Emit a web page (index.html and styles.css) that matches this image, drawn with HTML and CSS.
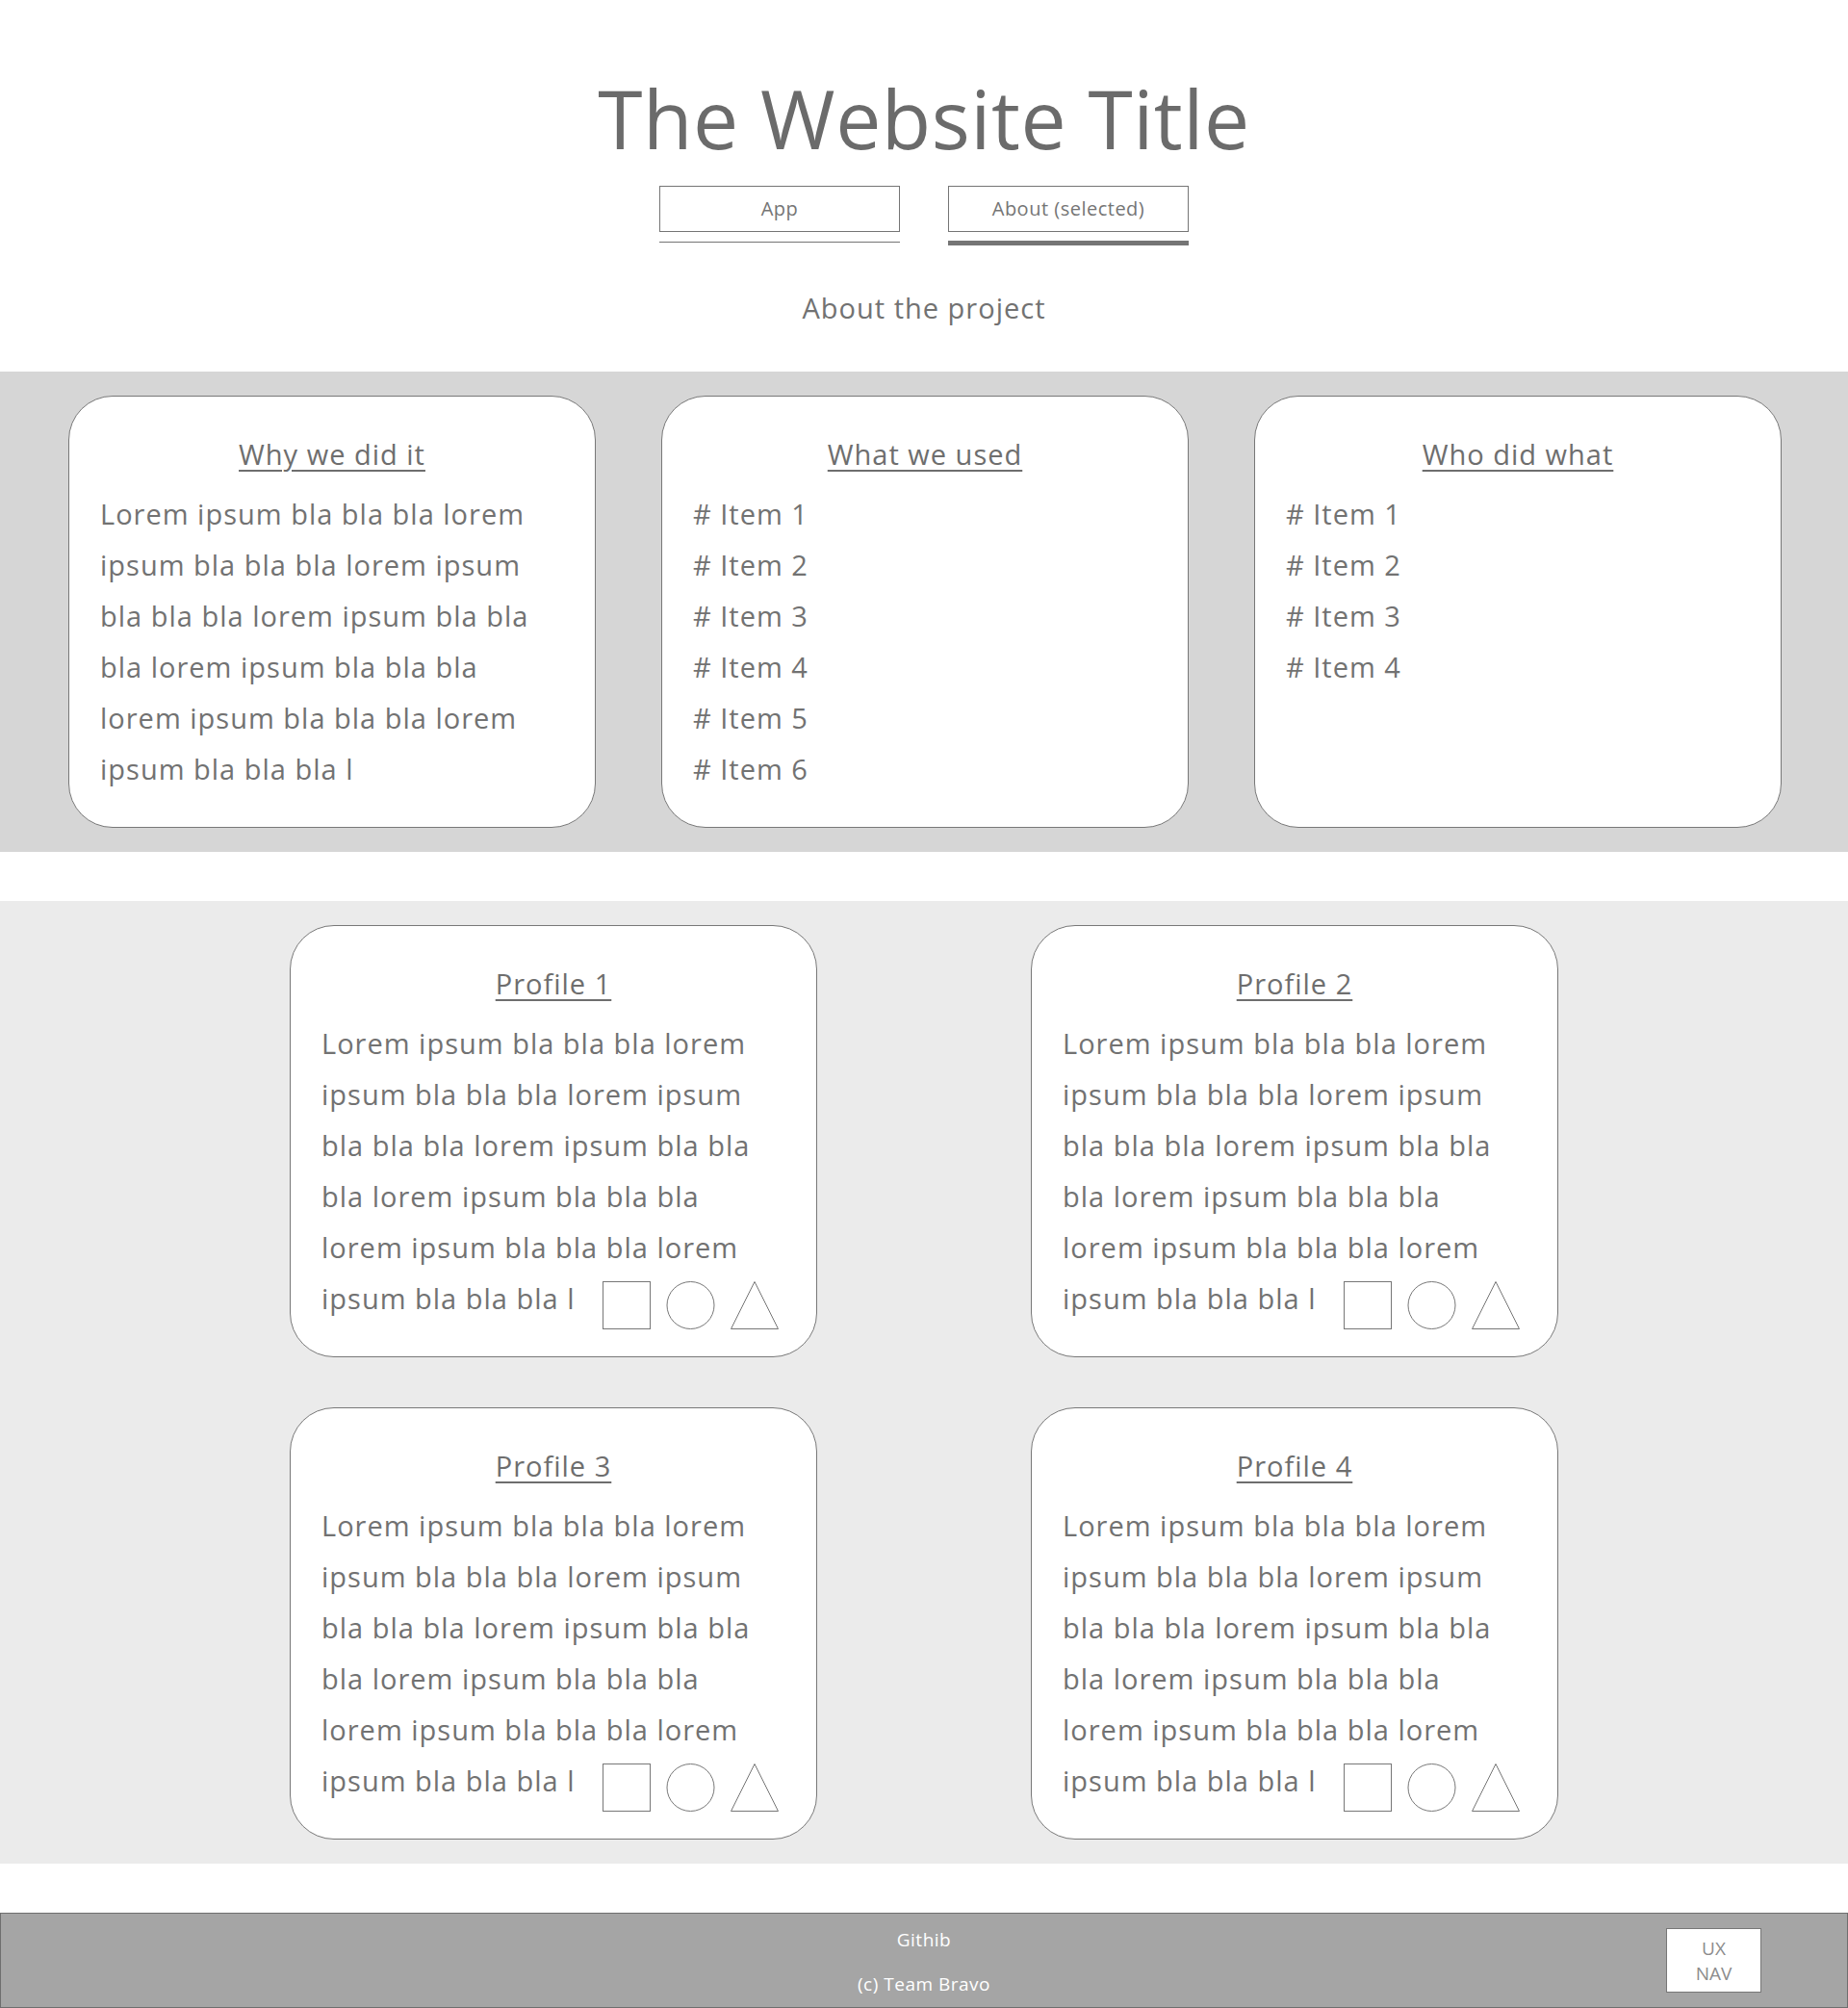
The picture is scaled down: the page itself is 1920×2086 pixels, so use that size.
FILE: index.html
```html
<!DOCTYPE html>
<html lang="en">
<head>
  <meta charset="UTF-8">
  <meta name="viewport" content="width=device-width, initial-scale=1.0">
  <title>The Website Title</title>
  <link rel="stylesheet" href="styles.css">
</head>
<body>
  <header>
    <h1>The Website Title</h1>
    <nav class="tabs">
      <div class="tab">
        <a class="tab-button" href="#">App</a>
        <div class="tab-line"></div>
      </div>
      <div class="tab selected">
        <a class="tab-button" href="#">About (selected)</a>
        <div class="tab-line"></div>
      </div>
    </nav>
    <p class="subtitle">About the project</p>
  </header>

  <section class="band about">
    <div class="card">
      <h2>Why we did it</h2>
      <p>Lorem ipsum bla bla bla lorem<br>ipsum bla bla bla lorem ipsum<br>bla bla bla lorem ipsum bla bla<br>bla lorem ipsum bla bla bla<br>lorem ipsum bla bla bla lorem<br>ipsum bla bla bla l</p>
    </div>
    <div class="card">
      <h2>What we used</h2>
      <ul>
        <li># Item 1</li>
        <li># Item 2</li>
        <li># Item 3</li>
        <li># Item 4</li>
        <li># Item 5</li>
        <li># Item 6</li>
      </ul>
    </div>
    <div class="card">
      <h2>Who did what</h2>
      <ul>
        <li># Item 1</li>
        <li># Item 2</li>
        <li># Item 3</li>
        <li># Item 4</li>
      </ul>
    </div>
  </section>

  <section class="band profiles">
    <div class="card">
      <h2>Profile 1</h2>
      <p>Lorem ipsum bla bla bla lorem<br>ipsum bla bla bla lorem ipsum<br>bla bla bla lorem ipsum bla bla<br>bla lorem ipsum bla bla bla<br>lorem ipsum bla bla bla lorem</p>
      <div class="last-line">
        <span>ipsum bla bla bla l</span>
        <span class="shapes">
          <svg width="50" height="50" viewBox="0 0 50 50"><rect x="0.5" y="0.5" width="49" height="49"/></svg>
          <svg width="51" height="50" viewBox="0 0 51 50"><circle cx="25.5" cy="25" r="24.5"/></svg>
          <svg width="50" height="50" viewBox="0 0 50 50"><polygon points="25,0.5 49.5,49.5 0.5,49.5"/></svg>
        </span>
      </div>
    </div>
    <div class="card">
      <h2>Profile 2</h2>
      <p>Lorem ipsum bla bla bla lorem<br>ipsum bla bla bla lorem ipsum<br>bla bla bla lorem ipsum bla bla<br>bla lorem ipsum bla bla bla<br>lorem ipsum bla bla bla lorem</p>
      <div class="last-line">
        <span>ipsum bla bla bla l</span>
        <span class="shapes">
          <svg width="50" height="50" viewBox="0 0 50 50"><rect x="0.5" y="0.5" width="49" height="49"/></svg>
          <svg width="51" height="50" viewBox="0 0 51 50"><circle cx="25.5" cy="25" r="24.5"/></svg>
          <svg width="50" height="50" viewBox="0 0 50 50"><polygon points="25,0.5 49.5,49.5 0.5,49.5"/></svg>
        </span>
      </div>
    </div>
    <div class="card">
      <h2>Profile 3</h2>
      <p>Lorem ipsum bla bla bla lorem<br>ipsum bla bla bla lorem ipsum<br>bla bla bla lorem ipsum bla bla<br>bla lorem ipsum bla bla bla<br>lorem ipsum bla bla bla lorem</p>
      <div class="last-line">
        <span>ipsum bla bla bla l</span>
        <span class="shapes">
          <svg width="50" height="50" viewBox="0 0 50 50"><rect x="0.5" y="0.5" width="49" height="49"/></svg>
          <svg width="51" height="50" viewBox="0 0 51 50"><circle cx="25.5" cy="25" r="24.5"/></svg>
          <svg width="50" height="50" viewBox="0 0 50 50"><polygon points="25,0.5 49.5,49.5 0.5,49.5"/></svg>
        </span>
      </div>
    </div>
    <div class="card">
      <h2>Profile 4</h2>
      <p>Lorem ipsum bla bla bla lorem<br>ipsum bla bla bla lorem ipsum<br>bla bla bla lorem ipsum bla bla<br>bla lorem ipsum bla bla bla<br>lorem ipsum bla bla bla lorem</p>
      <div class="last-line">
        <span>ipsum bla bla bla l</span>
        <span class="shapes">
          <svg width="50" height="50" viewBox="0 0 50 50"><rect x="0.5" y="0.5" width="49" height="49"/></svg>
          <svg width="51" height="50" viewBox="0 0 51 50"><circle cx="25.5" cy="25" r="24.5"/></svg>
          <svg width="50" height="50" viewBox="0 0 50 50"><polygon points="25,0.5 49.5,49.5 0.5,49.5"/></svg>
        </span>
      </div>
    </div>
  </section>

  <footer>
    <div class="footer-links">
      <p>Githib</p>
      <p>(c) Team Bravo</p>
    </div>
    <div class="ux-nav">UX<br>NAV</div>
  </footer>
</body>
</html>
```

FILE: styles.css
```css
body {
  margin: 0;
  font-family: "Open Sans", "Noto Sans", sans-serif;
  color: #727272;
  background: #fff;
}
header {
  text-align: center;
}
h1 {
  margin: 73px 0 0;
  font-size: 84px;
  line-height: 100px;
  font-weight: 400;
  letter-spacing: 0.5px;
  color: #6b6b6b;
}
.tabs {
  display: flex;
  justify-content: center;
  gap: 50px;
  margin-top: 20px;
}
.tab {
  width: 250px;
}
.tab-button {
  display: block;
  box-sizing: border-box;
  height: 48px;
  line-height: 46px;
  border: 1px solid #757575;
  font-size: 20px;
  letter-spacing: 0.5px;
  color: #757575;
  text-decoration: none;
}
.tab-line {
  height: 1px;
  margin-top: 10px;
  background: #757575;
}
.tab.selected .tab-line {
  height: 5px;
  margin-top: 9px;
}
.subtitle {
  margin: 45px 0 46px;
  font-size: 29px;
  line-height: 40px;
  letter-spacing: 1px;
}
.band {
  padding: 25px 0;
}
.about {
  display: grid;
  grid-template-columns: 548px 548px 548px;
  column-gap: 68px;
  padding-left: 71px;
  background: #d6d6d6;
}
.profiles {
  display: grid;
  grid-template-columns: 548px 548px;
  justify-content: center;
  column-gap: 222px;
  row-gap: 52px;
  margin-top: 51px;
  background: #ebebeb;
}
.card {
  box-sizing: border-box;
  width: 548px;
  height: 449px;
  padding: 40px 32px 0;
  background: #fff;
  border: 1px solid #787878;
  border-radius: 46px;
  font-size: 29px;
  letter-spacing: 1px;
}
.card h2 {
  margin: 0;
  font-size: 29px;
  line-height: 40px;
  font-weight: 400;
  text-align: center;
  text-decoration: underline;
  text-decoration-thickness: 2px;
  text-underline-offset: 5px;
  color: #6e6e6e;
}
.card p,
.card ul {
  margin: 15px 0 0;
  padding: 0;
  line-height: 53px;
  list-style: none;
}
.last-line {
  display: flex;
  align-items: center;
  justify-content: space-between;
  height: 53px;
  line-height: 53px;
}
.shapes {
  display: flex;
  gap: 16px;
  margin-top: 14px;
  padding-right: 7px;
}
.shapes svg {
  display: block;
  fill: none;
  stroke: #777;
  stroke-width: 1;
}
footer {
  display: grid;
  grid-template-columns: 1fr auto 1fr;
  box-sizing: border-box;
  height: 99px;
  margin-top: 51px;
  background: #a5a5a5;
  border: 1px solid #6e6e6e;
  color: #fff;
}
.footer-links {
  grid-column: 2;
  padding-top: 4px;
  text-align: center;
  font-size: 19px;
  letter-spacing: 0.5px;
}
.footer-links p {
  margin: 0;
  line-height: 46px;
}
.ux-nav {
  grid-column: 3;
  justify-self: end;
  align-self: start;
  box-sizing: border-box;
  width: 99px;
  height: 67px;
  margin: 15px 89px 0 0;
  padding-top: 7px;
  background: #fff;
  border: 1px solid #777;
  text-align: center;
  font-size: 19px;
  line-height: 26px;
  color: #8c8c8c;
}
```
